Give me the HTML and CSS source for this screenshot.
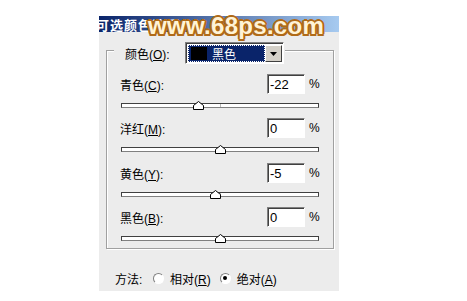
FILE: index.html
```html
<!DOCTYPE html>
<html lang="zh">
<head>
  <meta charset="UTF-8">
  <title>可选颜色选项</title>
  <link rel="stylesheet" href="styles.css">
</head>
<body>
  <div class="page">
    <div class="dialog">
      <div class="titlebar"><span class="title">可选颜色选项</span></div>
      <div class="body">
        <div class="group">
          <div class="legend">
            <span class="legend-label">颜色(<u>O</u>):</span>
            <div class="select">
              <div class="select-value"><span class="swatch"></span><span>黑色</span></div>
              <div class="select-btn">
                <svg width="7" height="4" viewBox="0 0 7 4"><polygon points="0,0 7,0 3.5,4" fill="#000"/></svg>
              </div>
            </div>
          </div>

          <div class="channels">
            <div class="channel">
              <div class="row"><span class="label">青色(<u>C</u>):</span><span class="field">-22</span><span class="pct">%</span></div>
              <div class="slider"><div class="track"><span class="tick"></span>
                <svg class="thumb" style="left:71px" width="11" height="9" viewBox="0 0 11 9"><polygon points="0.5,8.5 0.5,4.5 5.5,0.5 10.5,4.5 10.5,8.5" fill="#fff" stroke="#000"/></svg>
              </div></div>
            </div>
            <div class="channel">
              <div class="row"><span class="label">洋红(<u>M</u>):</span><span class="field">0</span><span class="pct">%</span></div>
              <div class="slider"><div class="track"><span class="tick"></span>
                <svg class="thumb" style="left:93px" width="11" height="9" viewBox="0 0 11 9"><polygon points="0.5,8.5 0.5,4.5 5.5,0.5 10.5,4.5 10.5,8.5" fill="#fff" stroke="#000"/></svg>
              </div></div>
            </div>
            <div class="channel">
              <div class="row"><span class="label">黄色(<u>Y</u>):</span><span class="field">-5</span><span class="pct">%</span></div>
              <div class="slider"><div class="track"><span class="tick"></span>
                <svg class="thumb" style="left:88px" width="11" height="9" viewBox="0 0 11 9"><polygon points="0.5,8.5 0.5,4.5 5.5,0.5 10.5,4.5 10.5,8.5" fill="#fff" stroke="#000"/></svg>
              </div></div>
            </div>
            <div class="channel">
              <div class="row"><span class="label">黑色(<u>B</u>):</span><span class="field">0</span><span class="pct">%</span></div>
              <div class="slider"><div class="track"><span class="tick"></span>
                <svg class="thumb" style="left:93px" width="11" height="9" viewBox="0 0 11 9"><polygon points="0.5,8.5 0.5,4.5 5.5,0.5 10.5,4.5 10.5,8.5" fill="#fff" stroke="#000"/></svg>
              </div></div>
            </div>
          </div>
        </div>

        <div class="method">
          <span class="method-label">方法:</span>
          <span class="radio"><span class="dot"></span><span>相对(<u>R</u>)</span></span>
          <span class="radio"><span class="dot on"></span><span>绝对(<u>A</u>)</span></span>
        </div>
      </div>
    </div>
    <div class="watermark">www.68ps.com</div>
  </div>
</body>
</html>
```

FILE: styles.css
```css
body {
  margin: 0;
  background: #fff;
  font-family: "Liberation Sans", "Noto Sans CJK SC", sans-serif;
  font-size: 12px;
  color: #000;
}
u {
  text-underline-offset: 1px;
}
.page {
  position: relative;
  width: 467px;
  height: 301px;
  padding: 16px 0 0 99px;
  box-sizing: border-box;
}
.dialog {
  width: 240px;
  height: 275px;
  background: #ececec;
  display: flex;
  flex-direction: column;
}
.titlebar {
  height: 16px;
  background: linear-gradient(to right, #0a246a, #a6caf0);
  overflow: hidden;
  display: flex;
  align-items: center;
}
.title {
  color: #fff;
  font-weight: bold;
  font-size: 13px;
  letter-spacing: 1px;
  margin-left: -3px;
  white-space: nowrap;
  font-family: "Noto Sans CJK SC", sans-serif;
}
.body {
  flex: 1;
  padding: 18px 0 0 7px;
}
.group {
  width: 228px;
  height: 199px;
  box-sizing: border-box;
  border: 1px solid #a0a0a0;
  box-shadow: inset 1px 1px #fff, 1px 1px #fff;
}
.legend {
  display: flex;
  align-items: center;
  width: fit-content;
  height: 22px;
  margin: -9px 0 0 7px;
  padding: 0 1px 0 11px;
  background: #ececec;
}
.legend-label {
  width: 60px;
}
.select {
  width: 99px;
  height: 22px;
  box-sizing: border-box;
  display: flex;
  padding: 2px 1px 1px 2px;
  background: #fff;
  border: 1px solid;
  border-color: #808080 #fff #fff #808080;
  box-shadow: inset 1px 1px #404040;
}
.select-value {
  flex: 1;
  display: flex;
  align-items: center;
  gap: 5px;
  padding-left: 3px;
  background: #0a246a;
  color: #fff;
  outline: 1px dotted #fff;
  outline-offset: -1px;
}
.swatch {
  width: 16px;
  height: 13px;
  background: #000;
}
.select-btn {
  width: 17px;
  box-sizing: border-box;
  display: flex;
  align-items: center;
  justify-content: center;
  background: #d4d0c8;
  border: 1px solid;
  border-color: #fff #404040 #404040 #fff;
}
.channels {
  margin-top: 10px;
}
.channel:nth-child(3) {
  margin-top: 1px;
}
.row {
  display: flex;
  align-items: center;
  height: 20px;
  padding-left: 13px;
}
.label {
  flex: 1;
}
.field {
  width: 38px;
  height: 20px;
  box-sizing: border-box;
  padding: 1px 0 0 2px;
  background: #fff;
  font-size: 13px;
  line-height: 17px;
  border: 1px solid;
  border-color: #808080 #fff #fff #808080;
  box-shadow: inset 1px 1px #404040;
}
.pct {
  width: 13px;
  margin: 0 11px 0 4px;
}
.slider {
  height: 24px;
  box-sizing: border-box;
  padding: 9px 0 0 14px;
}
.track {
  position: relative;
  width: 198px;
  height: 5px;
  box-sizing: border-box;
  background: #fff;
  border: 1px solid #404040;
  border-bottom-color: #808080;
}
.tick {
  position: absolute;
  left: 98px;
  top: 0;
  width: 1px;
  height: 100%;
  background: #b8b8b8;
}
.thumb {
  position: absolute;
  top: -3px;
}
.method {
  display: flex;
  align-items: center;
  height: 16px;
  margin-top: 21px;
  padding-left: 9px;
}
.method-label {
  width: 38px;
}
.radio {
  display: flex;
  align-items: center;
  gap: 6px;
  margin-right: 9px;
}
.dot {
  width: 11px;
  height: 11px;
  box-sizing: border-box;
  border-radius: 50%;
  background: #fff;
  border: 1px solid;
  border-color: #808080 #fff #fff #808080;
  display: flex;
  align-items: center;
  justify-content: center;
}
.dot.on::after {
  content: "";
  width: 4px;
  height: 4px;
  border-radius: 50%;
  background: #000;
}
.watermark {
  position: absolute;
  left: 148px;
  top: 12px;
  font: bold 24px "Liberation Sans", sans-serif;
  letter-spacing: 0.3px;
  color: #fff3d6;
  white-space: nowrap;
  text-shadow: -2px 0 #b06a18, 2px 0 #b06a18, 0 -2px #b06a18, 0 2px #b06a18,
    -1.5px -1.5px #b06a18, 1.5px -1.5px #b06a18, -1.5px 1.5px #b06a18, 1.5px 1.5px #b06a18;
}
```
